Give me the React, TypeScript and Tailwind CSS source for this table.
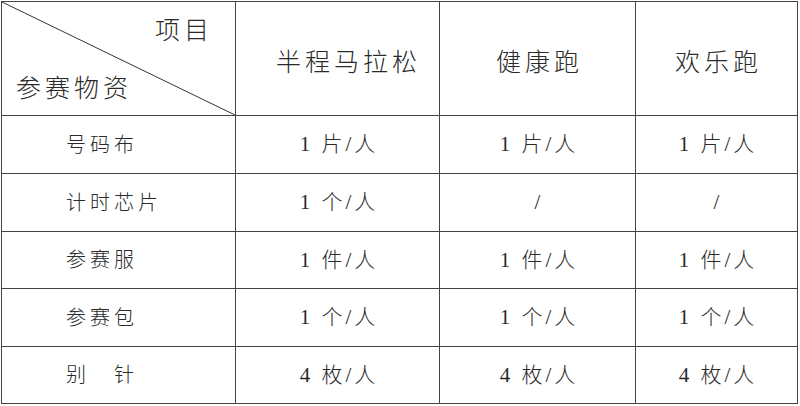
import React from 'react';

const columns = [
  { label: '半程马拉松', pad: 'pl-[22px]' },
  { label: '健康跑', pad: 'pl-[4px]' },
  { label: '欢乐跑', pad: 'pl-[4px]' },
];

const rows = [
  { name: '号码布', values: ['1 片/人', '1 片/人', '1 片/人'], h: 'h-[58px]' },
  { name: '计时芯片', values: ['1 个/人', '/', '/'], h: 'h-[58px]' },
  { name: '参赛服', values: ['1 件/人', '1 件/人', '1 件/人'], h: 'h-[57px]' },
  { name: '参赛包', values: ['1 个/人', '1 个/人', '1 个/人'], h: 'h-[58px]' },
  { name: '别　针', values: ['4 枚/人', '4 枚/人', '4 枚/人'], h: 'h-[57px]' },
];

const font = "font-['Liberation_Serif','Noto_Sans_CJK_SC',serif]";

export default function App() {
  return (
    <div className={`w-[800px] h-[406px] bg-white pl-px pt-px text-[#2a2a2a] ${font}`}>
      <table className="table-fixed border-collapse">
        <colgroup>
          <col className="w-[234px]" />
          <col className="w-[204px]" />
          <col className="w-[196px]" />
          <col className="w-[162px]" />
        </colgroup>
        <thead>
          <tr className="h-[114px]">
            <th className="relative border border-[#444] p-0 font-light">
              <svg className="absolute inset-0 w-full h-full" preserveAspectRatio="none" viewBox="0 0 100 100">
                <line x1="0" y1="0" x2="100" y2="100" stroke="#333" strokeWidth="1" vectorEffect="non-scaling-stroke" />
              </svg>
              <div className="flex flex-col h-[113px] justify-between pt-[16px] pb-[14px] text-[25px] tracking-[4px] leading-none">
                <span className="self-end pr-[22px]">项目</span>
                <span className="self-start pl-[14px]">参赛物资</span>
              </div>
            </th>
            {columns.map((c) => (
              <th key={c.label} className={`border border-[#444] font-light text-[25px] tracking-[4px] leading-none pt-[8px] ${c.pad}`}>
                {c.label}
              </th>
            ))}
          </tr>
        </thead>
        <tbody>
          {rows.map((r) => (
            <tr key={r.name} className={r.h}>
              <td className="border border-[#444] pl-[64px] text-[20px] tracking-[4px] font-light leading-none">
                {r.name}
              </td>
              {r.values.map((v, i) => (
                <td key={i} className="border border-[#444] text-center text-[21px] tracking-[3px] font-light leading-none pl-[3px]">
                  {v}
                </td>
              ))}
            </tr>
          ))}
        </tbody>
      </table>
    </div>
  );
}
